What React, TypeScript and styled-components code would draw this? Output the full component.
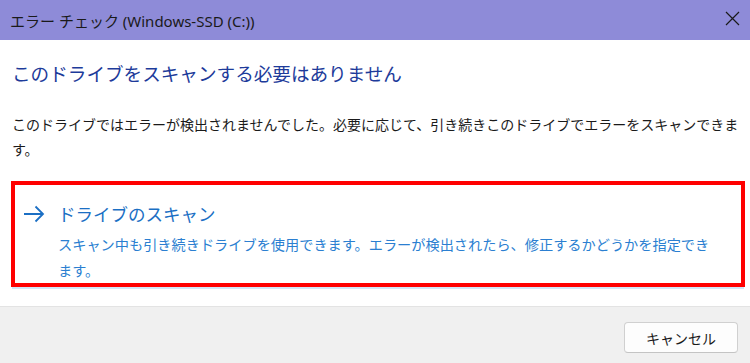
import styled, { createGlobalStyle } from "styled-components";

const GlobalStyle = createGlobalStyle`
  html, body {
    margin: 0;
    padding: 0;
    background: #ffffff;
  }
  body {
    font-family: "Noto Sans", "Noto Sans CJK JP", sans-serif;
  }
`;

const Dialog = styled.div`
  width: 750px;
  height: 363px;
  display: flex;
  flex-direction: column;
  overflow: hidden;
  background: #ffffff;
`;

const TitleBar = styled.div`
  height: 40px;
  flex: none;
  display: flex;
  align-items: center;
  justify-content: space-between;
  padding: 0 10px 0 10px;
  background: #8e8bd8;
  color: #1a1a1a;
  font-size: 15px;
`;

const CloseButton = styled.button`
  width: 16px;
  height: 16px;
  padding: 0;
  border: none;
  background: transparent;
  display: flex;
  align-items: center;
  justify-content: center;
  margin-top: -3px;
`;

const Content = styled.div`
  flex: 1;
  padding: 20px 5px 0 12px;
`;

const Heading = styled.h1`
  margin: 0;
  font-size: 18.6px;
  font-weight: 400;
  line-height: 28px;
  color: #1d3b9a;
`;

const Message = styled.p`
  margin: 24px 0 0 0;
  font-size: 14px;
  line-height: 25px;
  color: #1a1a1a;
`;

const Highlight = styled.div`
  margin: 19px 0 0 -1px;
  border: 4px solid #ff0000;
  box-shadow: 0 3px 0 -1px #d3e5f7;
`;

const CommandLink = styled.div`
  display: grid;
  grid-template-columns: 35px 1fr;
  padding: 16px 0 0 8px;
  height: 82px;
`;

const ArrowBox = styled.div`
  height: 26px;
  display: flex;
  align-items: center;
`;

const LinkText = styled.div`
  display: flex;
  flex-direction: column;
  gap: 5px;
`;

const LinkTitle = styled.div`
  font-size: 17.5px;
  line-height: 26px;
  color: #1b6fc4;
`;

const LinkNote = styled.div`
  font-size: 14.2px;
  line-height: 26px;
  color: #2b7fd1;
`;

const Footer = styled.div`
  height: 57px;
  flex: none;
  display: flex;
  justify-content: flex-end;
  align-items: flex-start;
  padding: 15px 12px 0 0;
  box-sizing: border-box;
  background: #f0f0f0;
  border-top: 1px solid #e3e3e3;
`;

const Button = styled.button`
  width: 114px;
  height: 31px;
  border: 1px solid #d0d0d0;
  border-bottom-color: #c4c4c4;
  border-radius: 4px;
  background: #fdfdfd;
  font-family: "Noto Sans", "Noto Sans CJK JP", sans-serif;
  font-size: 14px;
  color: #1a1a1a;
  padding: 0;
`;

export default function App() {
  return (
    <>
      <GlobalStyle />
      <Dialog>
        <TitleBar>
          <span>エラー チェック (Windows-SSD (C:))</span>
          <CloseButton aria-label="閉じる">
            <svg width="15" height="15" viewBox="0 0 15 15">
              <path d="M1 1 L14 14 M14 1 L1 14" stroke="#1a1a1a" strokeWidth="1.2" fill="none" />
            </svg>
          </CloseButton>
        </TitleBar>
        <Content>
          <Heading>このドライブをスキャンする必要はありません</Heading>
          <Message>
            このドライブではエラーが検出されませんでした。必要に応じて、引き続きこのドライブでエラーをスキャンできま
            <br />
            す。
          </Message>
          <Highlight>
            <CommandLink>
              <ArrowBox>
                <svg width="22" height="18" viewBox="0 0 22 18">
                  <path
                    d="M1 9 H20 M12.5 1.5 L20 9 L12.5 16.5"
                    stroke="#1b6fc4"
                    strokeWidth="1.8"
                    fill="none"
                  />
                </svg>
              </ArrowBox>
              <LinkText>
                <LinkTitle>ドライブのスキャン</LinkTitle>
                <LinkNote>
                  スキャン中も引き続きドライブを使用できます。エラーが検出されたら、修正するかどうかを指定でき
                  <br />
                  ます。
                </LinkNote>
              </LinkText>
            </CommandLink>
          </Highlight>
        </Content>
        <Footer>
          <Button>キャンセル</Button>
        </Footer>
      </Dialog>
    </>
  );
}
